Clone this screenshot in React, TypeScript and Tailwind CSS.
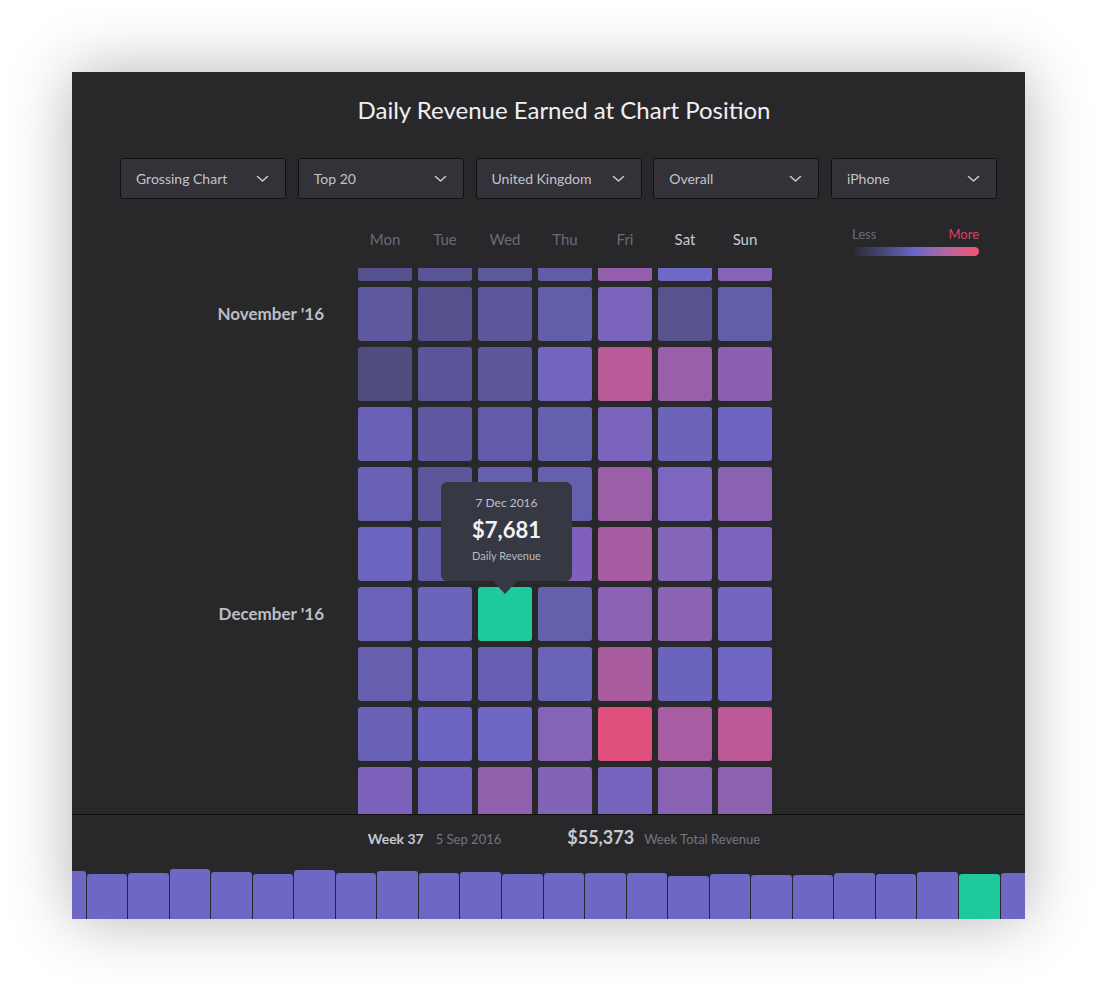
import React from "react";

const DAYS = ["Mon", "Tue", "Wed", "Thu", "Fri", "Sat", "Sun"];

const CELLS: string[][] = [
  ["#565290", "#5a5595", "#5d5a9c", "#615ca3", "#9460ae", "#6e68c6", "#8563b8"],
  ["#5e589e", "#57508e", "#5d589c", "#635ea8", "#7b64bc", "#57538f", "#625ea8"],
  ["#514d80", "#5a5598", "#5d589a", "#7165be", "#b85a98", "#9a5fab", "#8c60b0"],
  ["#6760b4", "#5f59a2", "#625caa", "#6660b0", "#7a64bc", "#6b64b8", "#6e65c0"],
  ["#6760b5", "#5c569c", "#6560ad", "#6560ae", "#9c5ea6", "#7c66c0", "#8a62b3"],
  ["#6b65c0", "#625cac", "#6c62b8", "#8060bb", "#a65ca0", "#8365ba", "#7c64bd"],
  ["#6a63b9", "#6a64ba", "#1ec99d", "#6560ab", "#8c62b4", "#8c62b3", "#7465be"],
  ["#665fb0", "#6a63b9", "#6760b2", "#6a64b8", "#a85c9e", "#6b64bd", "#6e66c2"],
  ["#6861b5", "#6d65c2", "#6f67c6", "#8564b8", "#e0507c", "#a85ca2", "#bd5896"],
  ["#7d62bb", "#7262c0", "#9061ad", "#8163b8", "#7664bf", "#8a62b3", "#8c62b0"],
];

const MONTHS: Record<number, string> = { 1: "November '16", 6: "December '16" };

const BARS = [48, 45, 46, 50, 47, 45, 49, 46, 48, 46, 47, 45, 46, 46, 46, 43, 45, 44, 44, 46, 45, 47, 45, 46];

const FILTERS = ["Grossing Chart", "Top 20", "United Kingdom", "Overall", "iPhone"];

function Chevron() {
  return (
    <svg width="13" height="8" viewBox="0 0 13 8" fill="none">
      <polyline points="1.5,1.5 6.5,6 11.5,1.5" stroke="#c8c8d0" strokeWidth="1.6" strokeLinecap="round" strokeLinejoin="round" />
    </svg>
  );
}

function Tooltip() {
  return (
    <>
      <div className="absolute left-[-37px] top-[-105px] z-10 flex h-[99px] w-[131px] flex-col items-center rounded-[6px] bg-[#363844] pt-[13px]">
        <div className="text-[12px] leading-[16px] text-[#bfc0c8]">7 Dec 2016</div>
        <div className="mt-[5px] text-[22px] font-bold leading-[28px] text-[#f2f2f4]">$7,681</div>
        <div className="mt-[4px] text-[11px] leading-[16px] text-[#b8b9c2]">Daily Revenue</div>
      </div>
      <div className="absolute left-[15px] top-[-6px] z-10 h-0 w-0 border-l-[12px] border-r-[12px] border-t-[13px] border-l-transparent border-r-transparent border-t-[#363844]" />
    </>
  );
}

export default function App() {
  return (
    <div className="min-h-screen bg-white pl-[72px] pt-[72px] font-['Lato',sans-serif]">
      <div className="relative flex h-[847px] w-[953px] flex-col overflow-hidden bg-[#28282b] shadow-[0_0_60px_rgba(0,0,0,0.3)]">
        {/* Title */}
        <div className="flex h-[86px] justify-center pl-[31px] pt-[22px]">
          <h1 className="text-[24px] leading-[32px] text-[#f0f0f2]">Daily Revenue Earned at Chart Position</h1>
        </div>

        {/* Filters */}
        <div className="flex gap-[11.75px] pl-[48px]">
          {FILTERS.map((f) => (
            <div
              key={f}
              className="flex h-[41px] w-[166px] items-center justify-between rounded-[3px] border border-[#111113] bg-[#333238] pl-[15px] pr-[16px]"
            >
              <span className="text-[14px] text-[#c3c3cb]">{f}</span>
              <Chevron />
            </div>
          ))}
        </div>

        {/* Day header + legend */}
        <div className="flex h-[69px] pl-[286px]">
          <div className="flex gap-[6px] pt-[29px]">
            {DAYS.map((d, i) => (
              <div
                key={d}
                className={`w-[54px] text-center text-[15px] leading-[22px] ${i >= 5 ? "text-[#c8c8cf]" : "text-[#6b6b78]"}`}
              >
                {d}
              </div>
            ))}
          </div>
          <div className="ml-[80px] w-[127px] pt-[27px]">
            <div className="flex justify-between text-[13px] leading-[17px]">
              <span className="text-[#6b6b78]">Less</span>
              <span className="text-[#d9435f]">More</span>
            </div>
            <div className="mt-[4px] h-[9px] rounded-full bg-gradient-to-r from-[#2a2931] via-[#6c66c8] to-[#f5506e]" />
          </div>
        </div>

        {/* Calendar grid */}
        <div className="relative h-[546px] overflow-hidden">
          <div className="mt-[-41px]">
            {CELLS.map((row, r) => (
              <div key={r} className="mb-[6px] flex h-[54px]">
                <div className="w-[252px] text-right text-[17px] font-bold leading-[54px] text-[#bdbdc5]">
                  {MONTHS[r] ?? ""}
                </div>
                <div className="ml-[34px] flex gap-[6px]">
                  {row.map((c, ci) => (
                    <div key={ci} className="relative h-[54px] w-[54px] rounded-[3px]" style={{ backgroundColor: c }}>
                      {r === 6 && ci === 2 ? <Tooltip /> : null}
                    </div>
                  ))}
                </div>
              </div>
            ))}
          </div>
        </div>

        {/* Footer */}
        <div className="flex flex-1 flex-col border-t border-[#0d0d0e]">
          <div className="flex h-[45px] items-center justify-center pl-[31px]">
            <div className="flex items-baseline">
              <span className="text-[14px] font-bold text-[#c8c8cf]">Week 37</span>
              <span className="ml-[12px] text-[13px] text-[#74747f]">5 Sep 2016</span>
              <span className="ml-[66px] text-[18px] font-bold text-[#c8c8cf]">$55,373</span>
              <span className="ml-[10px] text-[13px] text-[#74747f]">Week Total Revenue</span>
            </div>
          </div>
          <div className="ml-[-27px] flex flex-1 items-end gap-[1px]">
            {BARS.map((h, i) => (
              <div
                key={i}
                className={`w-[40.55px] shrink-0 rounded-t-[3px] ${i === 22 ? "bg-[#1ec99d]" : "bg-[#6e67c4]"}`}
                style={{ height: h }}
              />
            ))}
          </div>
        </div>
      </div>
    </div>
  );
}
